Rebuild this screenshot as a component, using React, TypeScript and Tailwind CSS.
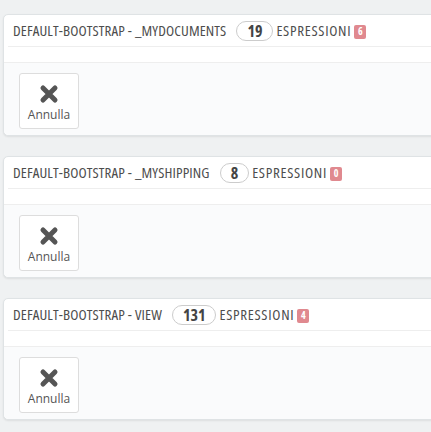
const modules = [
  { name: 'DEFAULT-BOOTSTRAP - _MYDOCUMENTS', count: 19, missing: 6 },
  { name: 'DEFAULT-BOOTSTRAP - _MYSHIPPING', count: 8, missing: 0 },
  { name: 'DEFAULT-BOOTSTRAP - VIEW', count: 131, missing: 4 },
];

function CancelIcon() {
  return (
    <svg width="20" height="20" viewBox="0 0 20 20" className="block">
      <path d="M4 4 L16 16 M16 4 L4 16" stroke="#555" strokeWidth="5" strokeLinecap="round" />
    </svg>
  );
}

function Panel({ name, count, missing }: { name: string; count: number; missing: number }) {
  return (
    <div className="w-[460px] mb-[20px] rounded-[5px] border border-[#dfe3e5] bg-white shadow-[0_1px_2px_rgba(0,0,0,0.08)]">
      <div className="mx-[4px] h-[32px] flex items-center border-b border-[#eeeeee] pl-[5px] text-[#4d4d4d] font-['Open_Sans',sans-serif] [font-stretch:75%] tracking-[0.12px] text-[15px] uppercase">
        <span>{name}</span>
        <span className="ml-[10px] mr-[3px] h-[20px] px-[10px] flex items-center justify-center rounded-full border border-[#cccccc] font-bold text-[16px] text-[#444] tracking-normal">
          {count}
        </span>
        <span className="tracking-[0.7px]">Espressioni</span>
        <span className="ml-[3px] mt-[2px] h-[14px] min-w-[12px] px-[3px] flex items-center justify-center rounded-[2px] bg-[#e0898f] text-white text-[10px] font-bold tracking-normal">
          {missing}
        </span>
      </div>
      <div className="h-[15px]" />
      <div className="border-t border-[#eeeeee] bg-[#fafbfc] rounded-b-[5px] pt-[10px] pb-[6px] pl-[15px]">
        <button className="w-[60px] h-[56px] flex flex-col items-center pt-[10px] rounded-[3px] border border-[#dddddd] bg-white font-['Open_Sans',sans-serif] text-[12px] text-[#555]">
          <CancelIcon />
          <span className="mt-[3px] leading-[15px]">Annulla</span>
        </button>
      </div>
    </div>
  );
}

export default function App() {
  return (
    <div className="min-h-screen bg-[#eff1f2] pt-[14px] pl-[3px] overflow-hidden">
      {modules.map((m) => (
        <Panel key={m.name} {...m} />
      ))}
    </div>
  );
}
